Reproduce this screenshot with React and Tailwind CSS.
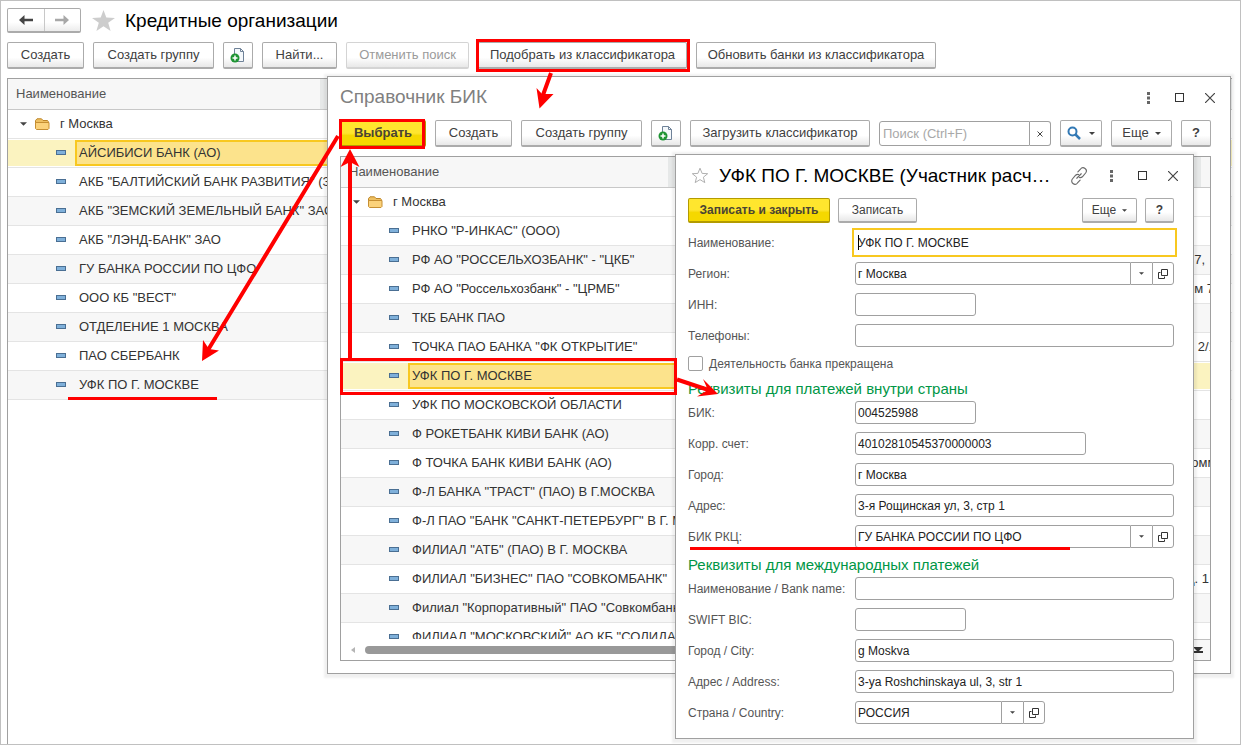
import { useState } from 'react'
import clsx from 'clsx'

const banks = [
  'АЙСИБИСИ БАНК (АО)',
  'АКБ "БАЛТИЙСКИЙ БАНК РАЗВИТИЯ" (ЗАО)',
  'АКБ "ЗЕМСКИЙ ЗЕМЕЛЬНЫЙ БАНК" ЗАО',
  'АКБ "ЛЭНД-БАНК" ЗАО',
  'ГУ БАНКА РОССИИ ПО ЦФО',
  'ООО КБ "ВЕСТ"',
  'ОТДЕЛЕНИЕ 1 МОСКВА',
  'ПАО СБЕРБАНК',
  'УФК ПО Г. МОСКВЕ',
].map((name) => ({ name }))

const classifier = [
  { name: 'РНКО "Р-ИНКАС" (ООО)' },
  { name: 'РФ АО "РОССЕЛЬХОЗБАНК" - "ЦКБ"', address: ', 7,' },
  { name: 'РФ АО "Россельхозбанк" - "ЦРМБ"', address: 'ом 7' },
  { name: 'ТКБ БАНК ПАО' },
  { name: 'ТОЧКА ПАО БАНКА "ФК ОТКРЫТИЕ"', address: 'и 2/1' },
  { name: 'УФК ПО Г. МОСКВЕ' },
  { name: 'УФК ПО МОСКОВСКОЙ ОБЛАСТИ' },
  { name: 'Ф РОКЕТБАНК КИВИ БАНК (АО)' },
  { name: 'Ф ТОЧКА БАНК КИВИ БАНК (АО)', address: '-омм' },
  { name: 'Ф-Л БАНКА "ТРАСТ" (ПАО) В Г.МОСКВА' },
  { name: 'Ф-Л ПАО "БАНК "САНКТ-ПЕТЕРБУРГ" В Г. МОСКВЕ' },
  { name: 'ФИЛИАЛ "АТБ" (ПАО) В Г. МОСКВА' },
  { name: 'ФИЛИАЛ "БИЗНЕС" ПАО "СОВКОМБАНК"', address: 'д. 1' },
  { name: 'Филиал "Корпоративный" ПАО "Совкомбанк"' },
  { name: 'ФИЛИАЛ "МОСКОВСКИЙ" АО КБ "СОЛИДАРНОСТЬ"' },
]

const Caret = ({ className }) => (
  <svg viewBox="0 0 8 4" className={clsx('shrink-0', className)} fill="currentColor" aria-hidden="true">
    <path d="M0 0h8L4 4z" />
  </svg>
)

const Btn = ({ className, primary, small, children, ...rest }) => (
  <button
    type="button"
    className={clsx(
      'flex shrink-0 items-center justify-center whitespace-nowrap rounded-xs border border-b-2 disabled:border-[#d4d4d4] disabled:text-[#9a9a9a]',
      small ? 'h-[25px] text-xs' : 'h-[27px] text-[13px]',
      primary
        ? 'border-[#b39b00] bg-linear-to-b from-[#ffe62e] from-50% to-[#f5d800] to-60% font-bold text-[#4a4433]'
        : 'border-[#ababab] bg-linear-to-b from-white from-60% to-[#e8e8e8] text-[#404040]',
      className,
    )}
    {...rest}
  >
    {children}
  </button>
)

const CopyIcon = () => (
  <svg viewBox="0 0 16 16" className="size-4" fill="none" aria-hidden="true">
    <path d="M4.500 1.500h6l3 3v10h-9z" fill="#f4f8fb" stroke="#6f8298" />
    <path d="M10.500 1.500v3h3" stroke="#6f8298" />
    <circle cx="5" cy="11" r="4.500" fill="#1f9434" />
    <path d="M5 8.500v5M2.500 11h5" stroke="#fff" strokeWidth="1.500" />
  </svg>
)

const FolderIcon = () => (
  <svg viewBox="0 0 15 12" className="h-3 w-[15px] shrink-0" aria-hidden="true">
    <path d="M.5 10V2.500L2 .8h4.500L8 2.500h4.500l.8 1v1.500" fill="#eec062" stroke="#bd8528" />
    <path d="M.5 4.500h13.500v6l-1 1H1.500l-1-1z" fill="#fbd27b" stroke="#c68f33" />
  </svg>
)

const OpenIcon = () => (
  <svg viewBox="0 0 10 10" className="size-2.5" fill="none" stroke="#333" aria-hidden="true">
    <path d="M3.500.5h6v6h-6zM2.500 3.500h-2v6h6v-2" />
  </svg>
)

const WindowControls = ({ link }) => (
  <div className="-mr-[5px] flex shrink-0 items-center text-[#444]">
    {link && (
      <button type="button" aria-label="Ссылка" className="mr-4 flex size-5 items-center justify-center">
        <svg viewBox="0 0 24 24" className="size-[18px]" fill="none" stroke="#6a6a6a" strokeWidth="1.500" strokeLinecap="round" aria-hidden="true">
          <path d="M9 15l6-6M10.500 6.500l3.500-3.800a4.300 4.300 0 0 1 6.800 5.300l-4.300 5a4 4 0 0 1-4 1M13.500 17.500L10 21.300a4.300 4.300 0 0 1-6.800-5.300l4.300-5a4 4 0 0 1 4-1" />
        </svg>
      </button>
    )}
    <button type="button" aria-label="Меню" className="flex w-3 justify-center">
      <svg viewBox="0 0 3 12" className="h-3 w-[3px]" fill="#666" aria-hidden="true">
        <path d="M0 0h3v3H0zM0 4.500h3v3H0zM0 9h3v3H0z" />
      </svg>
    </button>
    <button type="button" aria-label="Развернуть" className="ml-[19px] flex w-3 justify-center">
      <svg viewBox="0 0 9 9" className="size-[9px]" fill="none" stroke="#333" strokeWidth="2" aria-hidden="true">
        <path d="M0 0h9v9H0z" />
      </svg>
    </button>
    <button type="button" aria-label="Закрыть" className="ml-[19px] flex w-3 justify-center">
      <svg viewBox="0 0 10 10" className="size-2.5" fill="none" stroke="#444" strokeWidth="1.200" aria-hidden="true">
        <path d="M0 0l10 10M10 0L0 10" />
      </svg>
    </button>
  </div>
)

const BankTable = ({ rows, selected, onSelect, stripe, nameWidth, addresses }) => (
  <table className="w-full table-fixed border-separate border-spacing-0 text-[13px] text-[#333]">
    <colgroup>
      <col className={nameWidth} />
      <col />
      {addresses && <col className="w-[23px]" />}
    </colgroup>
    <thead>
      <tr className="h-[31px] text-left text-[#555]">
        <th scope="col" className="border-b border-[#c8c8c8] bg-[#f7f7f7] p-0 font-normal">
          <div className="flex h-[30px] items-center border-r-[7px] border-[#e6e8e8] pl-2">Наименование</div>
        </th>
        <th className="border-b border-[#c8c8c8] bg-[#e9eaea] p-0"></th>
        {addresses && (
          <th className="border-b border-[#c8c8c8] bg-[#f7f7f7] p-0"><div className="h-[30px] w-[14px] bg-[#e6e8e8]"></div></th>
        )}
      </tr>
    </thead>
    <tbody>
      <tr className="h-[29px]">
        <td className="border-b border-[#e4e4e4] p-0">
          <div className="flex items-center pl-3">
            <Caret className="h-1 w-[7px] text-[#444]" />
            <span className="ml-2 flex"><FolderIcon /></span>
            <span className="ml-2.5">г Москва</span>
          </div>
        </td>
        <td className="border-b border-[#e4e4e4] p-0"></td>
        {addresses && <td className="border-b border-[#e4e4e4] p-0"></td>}
      </tr>
      {rows.map((row, i) => {
        const active = selected === i
        const cell = clsx('border-b border-[#e4e4e4] p-0', !active && i % 2 === stripe && 'bg-[#f7f7f7]')
        return (
          <tr key={row.name} className="h-[29px]" onClick={() => onSelect(i)}>
            <td className={cell}>
              <div className={clsx('flex h-[26px] items-center', active && 'bg-[#fbf3c0]')}>
                <span className="mb-0.5 flex w-[67px] shrink-0 pl-12">
                  <span className="h-[5px] w-2.5 border border-[#4a6f93] bg-[#7fb0da]"></span>
                </span>
                <span
                  className={clsx(
                    'flex h-full min-w-0 flex-1 items-center whitespace-nowrap border-2 border-r-0 pl-0.5',
                    active ? 'border-[#f8c820] bg-[#fce38c]' : 'border-transparent',
                  )}
                >
                  {row.name}
                </span>
              </div>
            </td>
            <td className={cell}><div className={clsx('h-[26px]', active && 'bg-[#fbf3c0]')}></div></td>
            {addresses && (
              <td className={cell}>
                <div className={clsx('flex h-[26px] items-center whitespace-nowrap', active && 'bg-[#fbf3c0]')}>
                  {row.address}
                </div>
              </td>
            )}
          </tr>
        )
      })}
    </tbody>
  </table>
)

const Field = ({ id, label, value, width = 'w-full', picker, focused }) => (
  <div className="flex h-[31px] items-center">
    <label htmlFor={id} className="w-[167px] shrink-0 whitespace-nowrap text-[#555]">{label}</label>
    <div className={clsx('relative flex h-[23px]', width)}>
      <input
        id={id}
        type="text"
        defaultValue={value}
        className={clsx(
          'h-full w-full min-w-0 border bg-white px-0.5 text-[#222]',
          focused ? 'border-white outline-2 outline-offset-1 outline-[#f8c820]' : 'border-[#a0a0a0] outline-none',
          !focused && (picker ? 'rounded-l-[3px]' : 'rounded-[3px]'),
        )}
      />
      {focused && <span className="absolute left-[3px] top-1 h-[15px] w-px bg-black"></span>}
      {picker && (
        <>
          <button type="button" aria-label="Выбрать из списка" className="flex w-[21px] shrink-0 items-center justify-center border-y border-[#a0a0a0] text-[#444]">
            <Caret className="h-[3px] w-[5px]" />
          </button>
          <button type="button" aria-label="Открыть" className="flex w-[22px] shrink-0 items-center justify-center rounded-r-[3px] border border-[#a0a0a0]">
            <OpenIcon />
          </button>
        </>
      )}
    </div>
  </div>
)

const windowClass = 'absolute border border-[#a0a0a0] bg-white pl-3 shadow-[0_1px_2px_3px_rgba(0,0,0,0.06)]'

const BankForm = () => (
  <section className={clsx(windowClass, 'left-[674px] right-[46px] top-[153px] pb-2.5 pr-[19px] text-xs')}>
    <header className="flex h-[43px] items-center pb-0.5">
      <svg viewBox="0 0 18 17" className="ml-[3px] mr-2 h-[17px] w-[18px] shrink-0 text-[#b0b0b0]" fill="none" stroke="currentColor" aria-hidden="true">
        <path d="M9 1.200l2.100 5.200 5.600.3-4.300 3.500 1.400 5.400L9 12.600l-4.800 3 1.400-5.400L1.300 6.700l5.600-.3z" />
      </svg>
      <h2 className="min-w-0 flex-1 whitespace-nowrap pl-0.5 text-[19px] text-black">УФК ПО Г. МОСКВЕ (Участник расч…</h2>
      <WindowControls link />
    </header>
    <div className="mb-1 flex">
      <Btn small primary className="w-[142px]">Записать и закрыть</Btn>
      <Btn small className="ml-2 w-[79px]">Записать</Btn>
      <Btn small className="ml-auto w-[55px] gap-1.5">Еще <Caret className="h-[3px] w-[5px]" /></Btn>
      <Btn small className="ml-2 w-[29px] text-sm font-bold">?</Btn>
    </div>
    <form>
      <Field id="name" label="Наименование:" value="УФК ПО Г. МОСКВЕ" focused />
      <Field id="region" label="Регион:" value="г Москва" picker />
      <Field id="inn" label="ИНН:" width="w-[121px]" />
      <Field id="phones" label="Телефоны:" />
      <label className="flex h-[25px] items-center gap-1.5 text-[#555]">
        <input type="checkbox" className="size-[15px] appearance-none rounded-xs border border-[#a0a0a0] bg-white checked:bg-[#f8c820]" />
        Деятельность банка прекращена
      </label>
      <h3 className="h-[21px] pt-[3px] text-[15px] leading-5 text-[#009646]">Реквизиты для платежей внутри страны</h3>
      <Field id="bic" label="БИК:" value="004525988" width="w-[121px]" />
      <Field id="account" label="Корр. счет:" value="40102810545370000003" width="w-[231px]" />
      <Field id="city" label="Город:" value="г Москва" />
      <Field id="address" label="Адрес:" value="3-я Рощинская ул, 3, стр 1" />
      <Field id="rkc" label="БИК РКЦ:" value="ГУ БАНКА РОССИИ ПО ЦФО" picker />
      <h3 className="h-[21px] pt-[3px] text-[15px] leading-5 text-[#009646]">Реквизиты для международных платежей</h3>
      <Field id="bank-name" label="Наименование / Bank name:" />
      <Field id="swift" label="SWIFT BIC:" width="w-[111px]" />
      <Field id="city-en" label="Город / City:" value="g Moskva" />
      <Field id="address-en" label="Адрес / Address:" value="3-ya Roshchinskaya ul, 3, str 1" />
      <Field id="country" label="Страна / Country:" value="РОССИЯ" width="w-[190px]" picker />
    </form>
  </section>
)

const ClassifierWindow = () => {
  const [selected, setSelected] = useState(5)

  return (
    <section className={clsx(windowClass, 'left-[326px] right-[9px] top-[75px] pb-3 pr-[19px]')}>
      <header className="flex h-[43px] items-center justify-between pb-0.5">
        <h2 className="text-[19px] text-[#808080]">Справочник БИК</h2>
        <WindowControls />
      </header>
      <div className="mb-[9px] flex items-center gap-[9px]">
        <Btn primary className="w-[86px]">Выбрать</Btn>
        <Btn className="w-[77px]">Создать</Btn>
        <Btn className="w-[121px]">Создать группу</Btn>
        <Btn className="w-[30px]" aria-label="Скопировать"><CopyIcon /></Btn>
        <Btn className="w-[180px]">Загрузить классификатор</Btn>
        <div className="flex h-[25px] min-w-0 flex-1 text-[13px]">
          <input
            type="text"
            aria-label="Поиск"
            placeholder="Поиск (Ctrl+F)"
            className="min-w-0 flex-1 rounded-l-[3px] border border-[#a0a0a0] px-[3px] outline-none placeholder:text-[#a8a8a8]"
          />
          <button type="button" aria-label="Очистить" className="flex w-[21px] items-center justify-center rounded-r-[3px] border border-l-0 border-[#a0a0a0]">
            <svg viewBox="0 0 6 6" className="size-1.5" stroke="#444" aria-hidden="true"><path d="M.5.5l5 5M5.500.5l-5 5" /></svg>
          </button>
        </div>
        <Btn className="w-[42px] gap-2" aria-label="Найти">
          <svg viewBox="0 0 14 14" className="size-3.5" fill="none" stroke="#3279b5" aria-hidden="true">
            <circle cx="5.500" cy="5.500" r="4" strokeWidth="2" />
            <path d="M8.500 8.500l4.500 4.500" strokeWidth="2.500" />
          </svg>
          <Caret className="h-[3px] w-[6px]" />
        </Btn>
        <Btn className="w-[61px] gap-1.5">Еще <Caret className="h-[3px] w-[6px]" /></Btn>
        <Btn className="w-[30px] text-sm font-bold">?</Btn>
      </div>
      <div className="border border-[#a0a0a0]">
        <div className="h-[482px] overflow-hidden">
          <BankTable rows={classifier} selected={selected} onSelect={setSelected} stripe={1} nameWidth="w-[334px]" addresses />
        </div>
        <div className="flex h-[21px] items-center">
          <svg viewBox="0 0 4 6" className="ml-2.5 h-1.5 w-1 shrink-0" fill="#b5b5b5" aria-hidden="true"><path d="M4 0v6L0 3z" /></svg>
          <div className="ml-2.5 h-2 flex-1 rounded-full bg-[#999]"></div>
          <button type="button" aria-label="В конец списка" className="ml-10 flex h-full w-[25px] items-center justify-center border-l border-t border-[#c0c0c0] bg-[#f7f7f7]">
            <svg viewBox="0 0 10 6" className="h-1.5 w-2.5" fill="#333" aria-hidden="true"><path d="M0 0h10L6 4h4v2H0V4h4z" /></svg>
          </button>
        </div>
      </div>
    </section>
  )
}

// red frames, underlines and arrows that show the order of the steps
const Callouts = () => (
  <svg className="pointer-events-none absolute -left-px -top-px h-[745px] w-[1241px]" fill="none" stroke="#f00" strokeWidth="3" aria-hidden="true">
    <path d="M477.500 40.500h211v30h-211zM340.500 120.500h83v27h-83zM341.500 359.500h334v34h-334z" />
    <path d="M68 398.500h149M690 548.500h380" />
    <path d="M551 73l-8 22M338 136L208 350M350 359V160M677 379.500l33 11" strokeWidth="4" />
    <g fill="#f00" stroke="none">
      <path d="M536.500 88l5.500 6 11.500 0L539.500 108.500z" />
      <path d="M203 340l6 9 10 1.500L202 361z" />
      <path d="M350 149l9.500 18-9.500-5-9.500 5z" />
      <path d="M703 379l15 15-21 2.500 11-6.500z" />
    </g>
  </svg>
)

export default function App() {
  const [selected, setSelected] = useState(0)

  return (
    <main className="relative flex min-h-screen flex-col overflow-hidden border border-[#c0c0c0] bg-white pl-1.5 pr-2 pt-[7px] font-['Liberation_Sans',Arial,sans-serif]">
      <header className="flex items-center">
        <div className="flex h-[25px] w-[74px] rounded-xs border border-b-2 border-[#ababab] bg-linear-to-b from-white from-60% to-[#ececec]">
          <button type="button" aria-label="Назад" className="flex flex-1 items-center justify-center border-r border-[#c8c8c8]">
            <svg viewBox="0 0 14 10" className="h-2.5 w-3.5" fill="#444" aria-hidden="true"><path d="M0 5l5.500-5v3.800H14v2.400H5.500V10z" /></svg>
          </button>
          <button type="button" aria-label="Вперед" className="flex flex-1 items-center justify-center">
            <svg viewBox="0 0 14 10" className="h-2.5 w-3.5" fill="#a8a8a8" aria-hidden="true"><path d="M14 5L8.500 0v3.800H0v2.400h8.500V10z" /></svg>
          </button>
        </div>
        <svg viewBox="0 0 23 21" className="ml-[11px] h-[21px] w-[23px]" fill="#cdcdcd" aria-hidden="true">
          <path d="M11.500 0l2.800 7.500 8.700.4-6.800 4.900 2.400 8.200-7.100-4.700L4.400 21l2.400-8.200L0 7.900l8.700-.4z" />
        </svg>
        <h1 className="ml-2.5 text-[19px] leading-6 text-black">Кредитные организации</h1>
      </header>
      <div className="mb-[9px] mt-[9px] flex gap-[9px]">
        <Btn className="w-[77px]">Создать</Btn>
        <Btn className="w-[121px]">Создать группу</Btn>
        <Btn className="w-[30px]" aria-label="Скопировать"><CopyIcon /></Btn>
        <Btn className="w-[75px]">Найти...</Btn>
        <Btn className="w-[123px]" disabled>Отменить поиск</Btn>
        <Btn className="w-[209px]">Подобрать из классификатора</Btn>
        <Btn className="w-[240px]">Обновить банки из классификатора</Btn>
      </div>
      <div className="flex-1 border-l border-t border-[#a0a0a0]">
        <BankTable rows={banks} selected={selected} onSelect={setSelected} stripe={0} nameWidth="w-[319px]" />
      </div>
      <ClassifierWindow />
      <BankForm />
      <Callouts />
    </main>
  )
}
